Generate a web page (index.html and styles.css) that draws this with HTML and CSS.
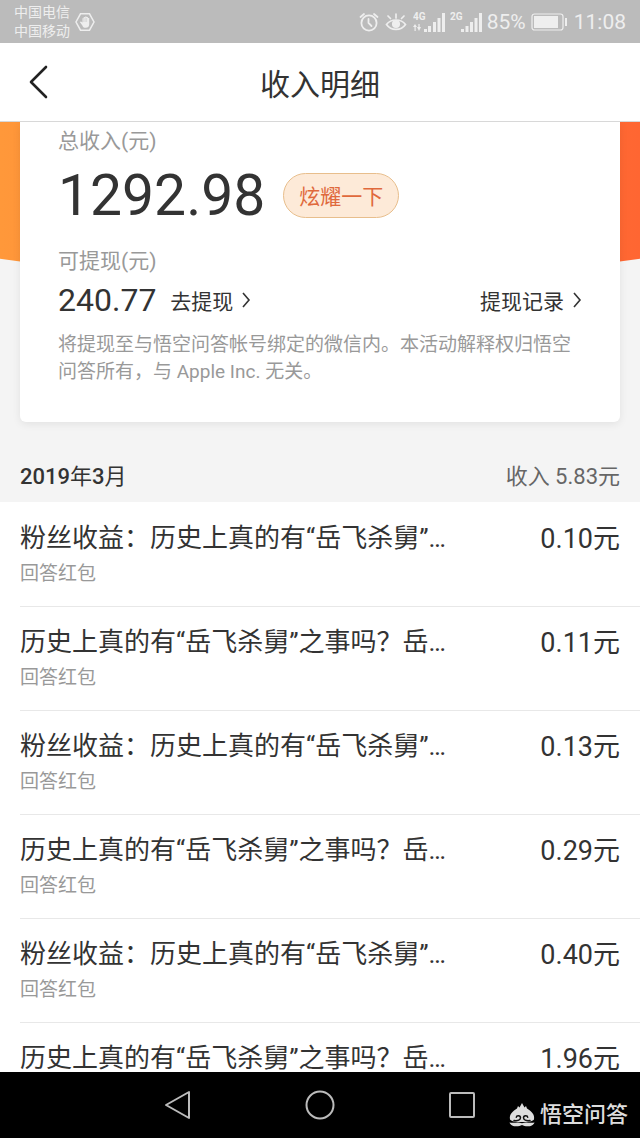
FILE: index.html
```html
<!DOCTYPE html>
<html lang="zh-CN">
<head>
    <meta charset="UTF-8">
    <meta name="viewport" content="width=device-width,initial-scale=1.0">
    <title>收入明细</title>
    <link rel="stylesheet" href="styles.css">
</head>
<body>
<div class="status">
    <div class="carrier">
        <div>中国电信<br>中国移动</div>
        <svg width="20" height="20" viewBox="0 0 20 20">
            <path d="M5.500 1.800h9L19 10l-4.500 8.200h-9L1 10z" fill="none" stroke="#eee" stroke-width="1.500"/>
            <path d="M6 9.500l1.500 1V6.200h1.200V5h1.400v-.6h1.400V5h1.400v1h1.300v6.500c0 2-1.300 3.300-3.400 3.300-2.200 0-3-1-3.600-2.600L4.800 10z" fill="#eee"/>
            <path d="M8.800 6.500v3.500M10.200 5.500V10M11.600 6v4" stroke="#bbb" stroke-width=".4"/>
        </svg>
    </div>
    <div class="system">
        <svg width="20" height="22" viewBox="0 0 20 22" fill="none" stroke="#eee" stroke-width="1.800" stroke-linecap="round">
            <circle cx="10" cy="12" r="7.600"/>
            <path d="M9.500 8v4l3 3M1.500 6L5 3M15 3l3.500 3"/>
        </svg>
        <svg class="eye" width="22" height="22" viewBox="0 0 22 22" fill="none" stroke="#eee" stroke-width="1.700" stroke-linecap="round">
            <path d="M1.500 13.500C6 7.500 16 7.500 20.500 13.500 16 20 6 20 1.500 13.500zM11 7V3M5.500 7.500L3 5M16.500 7.500L19 5"/>
            <circle cx="11" cy="13" r="3.200" fill="#eee"/>
        </svg>
        <svg class="signal" width="33" height="22" viewBox="0 0 33 22" fill="#eee">
            <text class="net" x="0" y="9">4G</text>
            <path d="M0 16l2-3 2 3H2.700v4H1.500v-4zM4 16h1.400v-3h1.200v3H8l-2 4zM11 18h3v3h-3zM15 15h3v6h-3zM20 11h3v10h-3zM24.500 7h3v14h-3zM29 2h3v19h-3z"/>
        </svg>
        <svg class="signal" width="33" height="22" viewBox="0 0 33 22" fill="#eee">
            <text class="net" x="0" y="9">2G</text>
            <path d="M11 18h3v3h-3zM15.500 15h3v6h-3zM20 11h3v10h-3zM24.500 7h3v14h-3zM29 2h3v19h-3z"/>
        </svg>
        <span class="percent">85%</span>
        <svg class="battery" width="37" height="18" viewBox="0 0 37 18">
            <rect x="1" y="1" width="31" height="16" rx="2.500" fill="none" stroke="#eee" stroke-width="1.200"/>
            <path d="M3 3h24v12H3zM34 5h2v8h-2z" fill="#eee"/>
        </svg>
        <span>11:08</span>
    </div>
</div>

<header class="header">
    <button class="back" type="button" aria-label="返回">
        <svg width="20" height="34" viewBox="0 0 20 34">
            <path d="M17 2L2 17l15 15" fill="none" stroke="#222" stroke-width="2.600" stroke-linecap="round" stroke-linejoin="round"/>
        </svg>
    </button>
    <h1>收入明细</h1>
</header>

<main class="main">
    <section class="hero">
        <div class="card">
            <p class="label">总收入(元)</p>
            <div class="total">
                <span class="total-num">1292.98</span>
                <button class="show-off" type="button">炫耀一下</button>
            </div>
            <p class="label">可提现(元)</p>
            <div class="cash">
                <span class="cash-num">240.77</span>
                <a class="link" href="#">去提现
                    <svg width="10" height="18" viewBox="0 0 10 18"><path d="M2 2l6 7-6 7" fill="none" stroke="#333" stroke-width="1.600"/></svg>
                </a>
                <a class="link record" href="#">提现记录
                    <svg width="10" height="18" viewBox="0 0 10 18"><path d="M2 2l6 7-6 7" fill="none" stroke="#333" stroke-width="1.600"/></svg>
                </a>
            </div>
            <p class="desc">将提现至与悟空问答帐号绑定的微信内。本活动解释权归悟空问答所有，与 Apple Inc. 无关。</p>
        </div>
    </section>

    <div class="month">
        <h2><b>2019</b>年<b>3</b>月</h2>
        <span>收入 5.83元</span>
    </div>
    <ul class="list">
        <li>
            <div><p class="title">粉丝收益：历史上真的有“岳飞杀舅”…</p><p class="type">回答红包</p></div>
            <span class="money">0.10元</span>
        </li>
        <li>
            <div><p class="title">历史上真的有“岳飞杀舅”之事吗？岳…</p><p class="type">回答红包</p></div>
            <span class="money">0.11元</span>
        </li>
        <li>
            <div><p class="title">粉丝收益：历史上真的有“岳飞杀舅”…</p><p class="type">回答红包</p></div>
            <span class="money">0.13元</span>
        </li>
        <li>
            <div><p class="title">历史上真的有“岳飞杀舅”之事吗？岳…</p><p class="type">回答红包</p></div>
            <span class="money">0.29元</span>
        </li>
        <li>
            <div><p class="title">粉丝收益：历史上真的有“岳飞杀舅”…</p><p class="type">回答红包</p></div>
            <span class="money">0.40元</span>
        </li>
        <li>
            <div><p class="title">历史上真的有“岳飞杀舅”之事吗？岳…</p></div>
            <span class="money">1.96元</span>
        </li>
    </ul>
</main>

<nav class="nav">
    <button type="button" aria-label="后退">
        <svg width="30" height="30" viewBox="0 0 30 30"><path d="M26 2v26L3 15z"/></svg>
    </button>
    <button type="button" aria-label="主屏幕">
        <svg width="30" height="30" viewBox="0 0 30 30"><circle cx="15" cy="15" r="13.500"/></svg>
    </button>
    <button type="button" aria-label="最近任务">
        <svg width="30" height="30" viewBox="0 0 30 30"><rect x="3" y="3" width="24" height="24" rx="1"/></svg>
    </button>
    <div class="mark">
        <svg width="26" height="24" viewBox="0 0 26 24">
            <path d="M1 16.500C0 11 4 8 8 5.500l1-2.500 1.500 1.500L13 0l2.500 4.500L17 3l1 2.500c4 2.500 8 5.500 7 11-2 2-5 2.500-12 2.500S3 18.500 1 16.500z" fill="#ddd"/>
            <path d="M5 17.500c4 .5 6.500-.5 6.500-2.700 0-2.600-4-2.800-4.200-.5M21 17.500c-4 .5-6.500-.5-6.500-2.700 0-2.600 4-2.800 4.200-.5" fill="none" stroke="#111" stroke-width="1.500" stroke-linecap="round"/>
            <path d="M.5 19.500c5 1 8-1 12.500.8 4.500-1.800 7.500.2 12.500-.8-1 3-4 3.800-7 3.800-2 0-4-.3-5.500-1.300-1.500 1-3.500 1.300-5.500 1.300-3 0-6-.8-7-3.800z" fill="#ddd"/>
        </svg>
        <span>悟空问答</span>
    </div>
</nav>
</body>
</html>
```
FILE: styles.css
```css
body, h1, h2, p, ul, li {
    margin: 0;
    padding: 0;
    list-style: none;
    font-weight: 400;
}

body {
    display: flex;
    flex-direction: column;
    height: 100vh;
    overflow: hidden;
    background: #f4f4f4;
    color: #333;
    font-family: Roboto, "Noto Sans CJK SC", sans-serif;
}

button {
    padding: 0;
    border: none;
    background: none;
    font-family: inherit;
}

svg {
    display: block;
    flex: none;
}

.status {
    display: flex;
    flex: none;
    justify-content: space-between;
    align-items: center;
    height: 43px;
    padding: 0 14px;
    background: #bbb;
    color: #eee;
}

.carrier {
    display: flex;
    align-items: center;
    gap: 5px;
    font-size: 14px;
    line-height: 19px;
}

.system {
    display: flex;
    align-items: center;
    font-size: 21px;
}

.eye {
    margin: 0 6px;
}

.signal {
    margin-right: 4px;
}

.net {
    font-size: 10px;
    font-weight: 700;
}

.battery {
    margin: 0 6px 0 5px;
}

.header {
    display: grid;
    grid-template-columns: 1fr auto 1fr;
    flex: none;
    align-items: center;
    height: 78px;
    border-bottom: 1px solid #d8d8d8;
    background: #fff;
}

.back {
    justify-self: start;
    padding: 0 29px;
}

.header h1 {
    font-size: 30px;
}

.main {
    flex: 1;
    min-height: 0;
    overflow: hidden;
}

.hero {
    position: relative;
    padding: 0 20px;
}

/* 卡片后面的橙色弧形 */
.hero::before {
    content: "";
    position: absolute;
    top: 0;
    left: 0;
    width: 100%;
    height: 158px;
    background: linear-gradient(to right, #ff983a, #ff6632);
    clip-path: ellipse(100% 100% at 50% 0);
}

.card {
    position: relative;
    padding: 5px 38px 37px;
    border-radius: 0 0 6px 6px;
    background: #fff;
    box-shadow: 0 2px 8px rgba(0, 0, 0, .08);
}

.label {
    font-size: 21px;
    line-height: 28px;
    color: #999;
}

.total {
    display: flex;
    align-items: center;
    gap: 18px;
    height: 80px;
    margin-bottom: 12px;
}

.total-num {
    font-size: 57px;
}

.show-off {
    height: 45px;
    padding: 0 15px;
    border: 1px solid #e8be8c;
    border-radius: 23px;
    background: #fdead8;
    color: #e0693c;
    font-size: 21px;
}

.cash {
    display: flex;
    align-items: center;
    gap: 14px;
    height: 50px;
}

.cash-num {
    font-size: 32px;
}

.link {
    display: flex;
    align-items: center;
    gap: 8px;
    color: #333;
    font-size: 21px;
    text-decoration: none;
}

.record {
    margin-left: auto;
}

.desc {
    margin-top: 6px;
    font-size: 19px;
    line-height: 27px;
    color: #999;
}

.month {
    display: flex;
    justify-content: space-between;
    padding: 35px 20px 5px;
    font-size: 22px;
    line-height: 40px;
    color: #666;
}

.month h2 {
    font-size: 22px;
    color: #333;
}

.month b {
    font-weight: 500;
}

.list {
    padding: 1px 0 0 20px;
    background: #fff;
}

.list li {
    display: flex;
    justify-content: space-between;
    height: 87px;
    padding: 16px 20px 0 0;
    border-bottom: 1px solid #e8e8e8;
}

.title {
    font-size: 26px;
    line-height: 38px;
}

.type {
    font-size: 19px;
    line-height: 34px;
    color: #999;
}

.money {
    font-size: 27px;
    line-height: 40px;
}

.nav {
    position: relative;
    display: flex;
    flex: none;
    justify-content: center;
    align-items: center;
    gap: 112px;
    height: 66px;
    background: #000;
}

.nav button svg {
    fill: none;
    stroke: #bbb;
    stroke-width: 2;
    stroke-linejoin: round;
}

/* 右下角水印 */
.mark {
    position: absolute;
    right: 12px;
    bottom: 8px;
    display: flex;
    align-items: center;
    gap: 5px;
    color: #ddd;
    font-size: 22px;
    font-weight: 500;
    line-height: 30px;
}
```
